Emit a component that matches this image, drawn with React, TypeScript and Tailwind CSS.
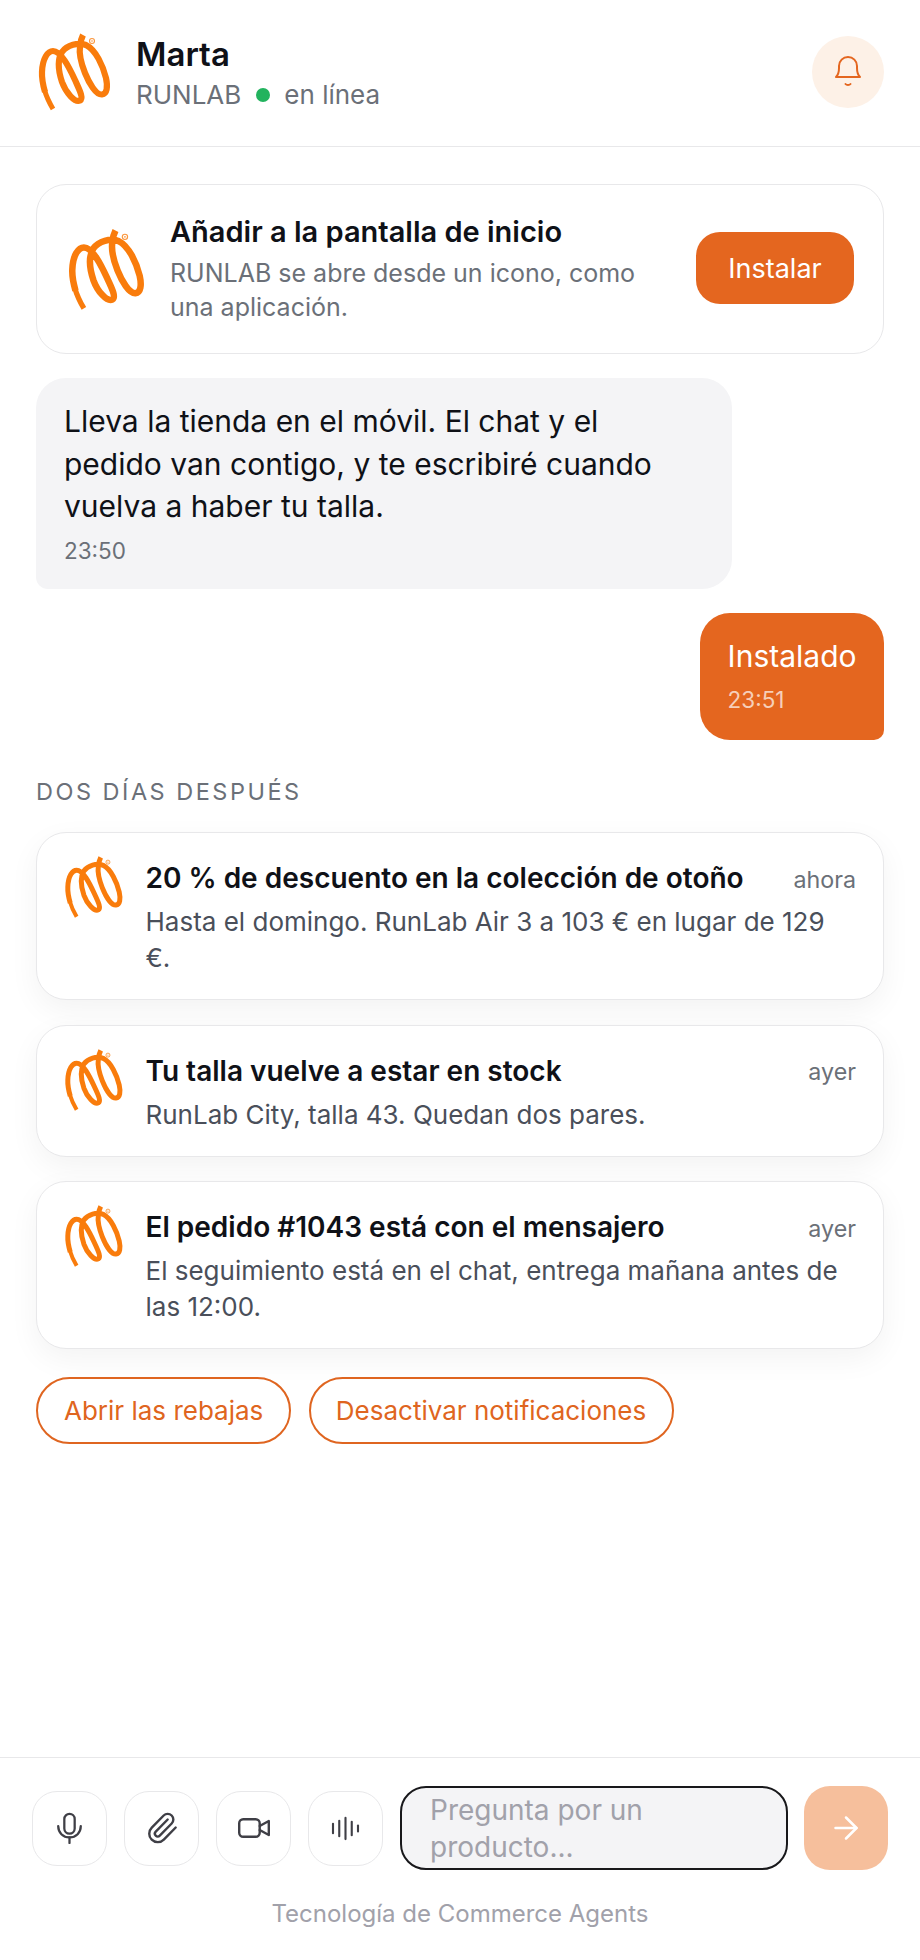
function Logo({ className }: { className: string }) {
  return (
    <svg viewBox="16 11 76 82" className={className} fill="none">
      <path
        d="M25 72C23 65 21.700 58 22 52C22.500 38 28 31 33 31C41 31 49 47 55 60C59 69 64 78 60 80.500C55 83 46 73 42 62C38 50 37 40 42 32C47 25 58 22 66 25C76 30 83 46 86 58C88 67 87 74 82 74.500C76 75 69 63 65 53C61 43 59 33 60 26C60.500 21 61.500 18 63 15"
        stroke="#f97c0c"
        strokeWidth="6.200"
      />
      <path d="M24.500 70C26.500 77 29.500 83 33 89" stroke="#f97c0c" strokeWidth="5" />
      <circle cx="72" cy="21" r="2.500" stroke="#f97c0c" strokeWidth="1.100" opacity="0.8" />
      <circle cx="72" cy="21" r="0.800" fill="#f97c0c" opacity="0.8" />
    </svg>
  );
}

function BellIcon() {
  return (
    <svg viewBox="0 0 28 34" className="h-[34px] w-[28px]" fill="none" stroke="#e4661f" strokeWidth="2" strokeLinecap="round" strokeLinejoin="round">
      <path d="M2 22h24c-2-2-3-4-3-9V11c0-5-4-9-9-9s-9 4-9 9v2c0 5-1 7-3 9Z" />
      <path d="M11.500 29c1 1.300 4 1.300 5 0" />
    </svg>
  );
}

function MicIcon() {
  return (
    <svg viewBox="0 0 28 34" className="h-[32px] w-[27px]" fill="none" stroke="#3f3f46" strokeWidth="2.400" strokeLinecap="round">
      <rect x="8.500" y="2" width="11" height="21" rx="5.500" />
      <path d="M2 15c0 7 5 12 12 12s12-5 12-12" />
      <path d="M14 27v6" />
    </svg>
  );
}

function ClipIcon() {
  return (
    <svg viewBox="0 0 24 24" className="h-[34px] w-[34px]" fill="none" stroke="#3f3f46" strokeWidth="1.700" strokeLinecap="round" strokeLinejoin="round">
      <path d="m16 6-8.414 8.586a2 2 0 0 0 2.829 2.829l8.414-8.586a4 4 0 1 0-5.657-5.657l-8.379 8.551a6 6 0 1 0 8.485 8.485l8.379-8.551" />
    </svg>
  );
}

function VideoIcon() {
  return (
    <svg viewBox="0 0 32 20" className="h-[20px] w-[32px]" fill="none" stroke="#3f3f46" strokeWidth="2.400" strokeLinecap="round" strokeLinejoin="round">
      <rect x="1.200" y="1.200" width="20.500" height="17.600" rx="4" />
      <path d="M21.700 8 30.800 3v14l-9.100-5" />
    </svg>
  );
}

function WaveIcon() {
  return (
    <svg viewBox="0 0 30 26" className="h-[25px] w-[29px]" fill="none" stroke="#3f3f46" strokeWidth="2.200" strokeLinecap="round">
      <path d="M2 8v10" />
      <path d="M8.500 5v16" />
      <path d="M15 2v22" />
      <path d="M21.500 6v14" />
      <path d="M28 10v6" />
    </svg>
  );
}

function ArrowIcon() {
  return (
    <svg viewBox="0 0 24 24" className="h-[36px] w-[36px]" fill="none" stroke="#ffffff" strokeWidth="1.700" strokeLinecap="round" strokeLinejoin="round">
      <path d="M5 12h14" />
      <path d="m12 5 7 7-7 7" />
    </svg>
  );
}

function Notification({ title, time, body }: { title: string; time: string; body: string }) {
  return (
    <div className="flex gap-[21.500px] rounded-[30px] border-[1.500px] border-[#e8e8ea] bg-white pl-[26px] pr-[27px] pt-[27px] pb-[23px] shadow-[0_10px_30px_rgba(0,0,0,0.05)]">
      <Logo className="-mt-[6px] h-[66px] w-[61px] shrink-0" />
      <div className="min-w-0 flex-1">
        <div className="flex items-start justify-between gap-[20px]">
          <div className="text-[28px] font-semibold leading-[36px] text-[#0f1117]">{title}</div>
          <div className="pt-[3.500px] text-[23.250px] leading-[32px] text-[#6b7078]">{time}</div>
        </div>
        <div className="mt-[8px] text-[26px] leading-[36px] text-[#4a4f5a]">{body}</div>
      </div>
    </div>
  );
}

function ToolButton({ children }: { children: React.ReactNode }) {
  return (
    <div className="flex h-[75px] w-[75px] shrink-0 items-center justify-center rounded-[25px] border-[1.500px] border-[#e8e8ea] bg-white">
      {children}
    </div>
  );
}

export default function App() {
  return (
    <div className="flex h-[1960px] w-[920px] flex-col bg-white font-['Inter',sans-serif]">
      <header className="flex h-[147px] shrink-0 items-center border-b-[1.500px] border-[#e8e8ea] pl-[36px] pr-[36px] pb-[3px]">
        <Logo className="h-[82px] w-[76px] shrink-0" />
        <div className="ml-[24px] mt-[4px] flex-1">
          <div className="text-[33px] font-semibold leading-[38px] text-[#0f1117]">Marta</div>
          <div className="mt-[4px] flex items-center text-[26px] leading-[36px] text-[#6b7078]">
            RUNLAB
            <span className="ml-[15px] mr-[14px] h-[14px] w-[14px] rounded-full bg-[#22b35e]" />
            en línea
          </div>
        </div>
        <div className="flex h-[72px] w-[72px] items-center justify-center rounded-full bg-[#fdf1e7]">
          <BellIcon />
        </div>
      </header>

      <main className="flex flex-1 flex-col pl-[36px] pr-[36px] pt-[37px]">
        <div className="flex h-[170px] items-center rounded-[30px] border-[1.500px] border-[#e8e8ea] bg-white pl-[29px] pr-[29px]">
          <Logo className="h-[87px] w-[80px] shrink-0" />
          <div className="ml-[24px] min-w-0 flex-1">
            <div className="text-[29px] font-semibold leading-[36px] text-[#0f1117]">Añadir a la pantalla de inicio</div>
            <div className="mt-[6px] text-[25px] leading-[34px] text-[#6b7078]">RUNLAB se abre desde un icono, como una aplicación.</div>
          </div>
          <div className="-mt-[3px] ml-[41px] flex h-[72px] w-[158px] shrink-0 items-center justify-center rounded-[24px] bg-[#e4661f] pt-[3px] text-[27px] font-normal text-white">
            Instalar
          </div>
        </div>

        <div className="mt-[24px] w-[696px] rounded-[30px] rounded-bl-[12px] bg-[#f4f4f6] pl-[28px] pr-[40px] pt-[22px] pb-[23px]">
          <div className="text-[30px] leading-[42.500px] text-[#0f1117]">
            Lleva la tienda en el móvil. El chat y el pedido van contigo, y te escribiré cuando vuelva a haber tu talla.
          </div>
          <div className="mt-[8px] text-[22.500px] leading-[30px] text-[#6b7078]">23:50</div>
        </div>

        <div className="mt-[24px] self-end rounded-[30px] rounded-br-[10px] bg-[#e4661f] pl-[27.500px] pr-[27.500px] pt-[22px] pb-[25px] text-white">
          <div className="text-[30px] leading-[42.500px]">Instalado</div>
          <div className="mt-[8px] text-[22.500px] leading-[30px] text-white/70">23:51</div>
        </div>

        <div className="mt-[37px] text-[23.500px] leading-[30px] tracking-[2.500px] text-[#6b7078]">DOS DÍAS DESPUÉS</div>

        <div className="mt-[25px] flex flex-col gap-[24.500px]">
          <Notification title="20 % de descuento en la colección de otoño" time="ahora" body="Hasta el domingo. RunLab Air 3 a 103 € en lugar de 129 €." />
          <Notification title="Tu talla vuelve a estar en stock" time="ayer" body="RunLab City, talla 43. Quedan dos pares." />
          <Notification title="El pedido #1043 está con el mensajero" time="ayer" body="El seguimiento está en el chat, entrega mañana antes de las 12:00." />
        </div>

        <div className="mt-[28px] flex gap-[17.500px]">
          <div className="flex h-[67px] items-center rounded-full border-[2px] border-[#df6520] pl-[26px] pr-[26px] text-[26px] text-[#df6520]">Abrir las rebajas</div>
          <div className="flex h-[67px] items-center rounded-full border-[2px] border-[#df6520] pl-[25px] pr-[25.500px] text-[26px] text-[#df6520]">Desactivar notificaciones</div>
        </div>
      </main>

      <footer className="h-[203px] shrink-0 border-t-[1.500px] border-[#e8e8ea] pl-[32px] pr-[32px] pt-[28px]">
        <div className="flex items-center gap-[17px]">
          <ToolButton><MicIcon /></ToolButton>
          <ToolButton><ClipIcon /></ToolButton>
          <ToolButton><VideoIcon /></ToolButton>
          <ToolButton><WaveIcon /></ToolButton>
          <div className="h-[84px] w-[388px] shrink-0 rounded-[26px] border-[2.500px] border-[#18181b] bg-[#f4f4f6] pl-[28px] pr-[20px] pt-[4px] text-[28px] leading-[37px] text-[#a1a1aa]">
            Pregunta por un producto...
          </div>
          <div className="-ml-[1px] flex h-[84px] w-[84px] shrink-0 items-center justify-center rounded-[26px] bg-[#f6bf9c]">
            <ArrowIcon />
          </div>
        </div>
        <div className="mt-[29px] text-center text-[24px] leading-[30px] text-[#a1a1aa]">Tecnología de Commerce Agents</div>
      </footer>
    </div>
  );
}
